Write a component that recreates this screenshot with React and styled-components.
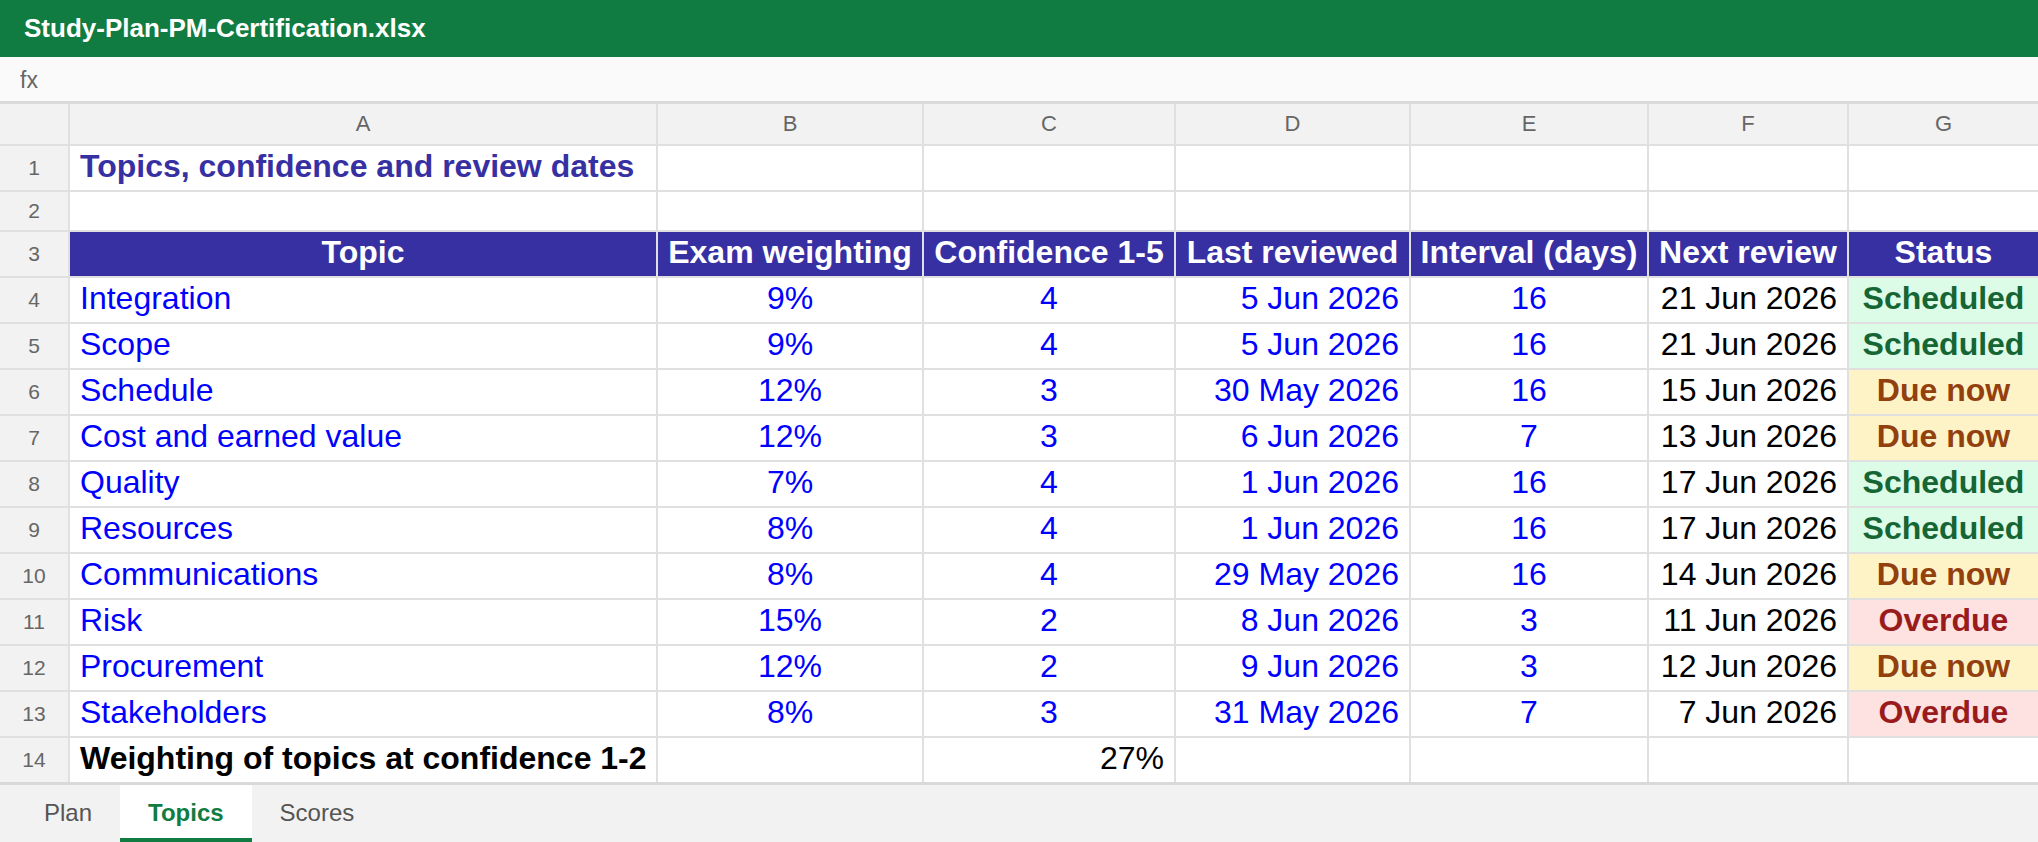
import React from "react";
import styled, { createGlobalStyle } from "styled-components";

const Global = createGlobalStyle`
  html, body { margin: 0; padding: 0; background: #ffffff; overflow: hidden; }
  body { font-family: "Liberation Sans", Arial, sans-serif; }
  * { box-sizing: border-box; }
`;

const Page = styled.div`
  width: 2038px;
  height: 842px;
  display: flex;
  flex-direction: column;
`;

const TitleBar = styled.div`
  height: 57px;
  background: #107c41;
  color: #ffffff;
  font-weight: 700;
  font-size: 26px;
  display: flex;
  align-items: center;
  padding-left: 24px;
`;

const FormulaBar = styled.div`
  height: 47px;
  background: #fafafa;
  border-bottom: 3px solid #dadada;
  display: flex;
  align-items: center;
  padding: 2px 0 0 20px;
  font-size: 23px;
  color: #666666;
`;

const Sheet = styled.div`
  display: grid;
  grid-template-columns: 68px 586px 264px 250px 233px 236px 198px 1fr;
  grid-template-rows: 40px 44px 38px repeat(12, 44px);
  gap: 2px;
  background: #e0e0e0;
`;

const Corner = styled.div`
  background: #f2f2f2;
`;

const ColHead = styled.div`
  background: #f2f2f2;
  color: #666666;
  font-size: 22px;
  display: flex;
  align-items: center;
  justify-content: center;
`;

const RowNum = styled.div`
  background: #f2f2f2;
  color: #666666;
  font-size: 21px;
  display: flex;
  align-items: center;
  justify-content: center;
`;

const justify = { left: "flex-start", center: "center", right: "flex-end" };

const Cell = styled.div`
  background: ${(p) => p.$bg || "#ffffff"};
  color: ${(p) => p.$color || "#000000"};
  font-size: 32px;
  font-weight: ${(p) => (p.$bold ? 700 : 400)};
  display: flex;
  align-items: center;
  justify-content: ${(p) => justify[p.$align || "left"]};
  padding: 0 10px 3px;
  white-space: nowrap;
  overflow: hidden;
`;

const TabBar = styled.div`
  flex: 1;
  background: #f2f2f2;
  border-top: 3px solid #d9d9d9;
  display: flex;
  padding-left: 16px;
`;

const Tab = styled.div`
  padding: 2px 28px 0;
  display: flex;
  align-items: center;
  font-size: 24px;
  font-weight: ${(p) => (p.$active ? 700 : 400)};
  color: ${(p) => (p.$active ? "#107c41" : "#555555")};
  background: ${(p) => (p.$active ? "#ffffff" : "transparent")};
  border-bottom: 4px solid ${(p) => (p.$active ? "#107c41" : "transparent")};
`;

const BLUE = "#0000ff";
const INDIGO = "#3730a3";

const STATUS = {
  Scheduled: { bg: "#dcfce7", color: "#166534" },
  "Due now": { bg: "#fef3c7", color: "#92400e" },
  Overdue: { bg: "#fee2e2", color: "#991b1b" },
};

const topics = [
  ["Integration", "9%", "4", "5 Jun 2026", "16", "21 Jun 2026", "Scheduled"],
  ["Scope", "9%", "4", "5 Jun 2026", "16", "21 Jun 2026", "Scheduled"],
  ["Schedule", "12%", "3", "30 May 2026", "16", "15 Jun 2026", "Due now"],
  ["Cost and earned value", "12%", "3", "6 Jun 2026", "7", "13 Jun 2026", "Due now"],
  ["Quality", "7%", "4", "1 Jun 2026", "16", "17 Jun 2026", "Scheduled"],
  ["Resources", "8%", "4", "1 Jun 2026", "16", "17 Jun 2026", "Scheduled"],
  ["Communications", "8%", "4", "29 May 2026", "16", "14 Jun 2026", "Due now"],
  ["Risk", "15%", "2", "8 Jun 2026", "3", "11 Jun 2026", "Overdue"],
  ["Procurement", "12%", "2", "9 Jun 2026", "3", "12 Jun 2026", "Due now"],
  ["Stakeholders", "8%", "3", "31 May 2026", "7", "7 Jun 2026", "Overdue"],
];

const headers = ["Topic", "Exam weighting", "Confidence 1-5", "Last reviewed", "Interval (days)", "Next review", "Status"];
const letters = ["A", "B", "C", "D", "E", "F", "G"];
const dataAlign = ["left", "center", "center", "right", "center", "right", "center"];

function Empty({ n }) {
  return Array.from({ length: n }, (_, i) => <Cell key={i} />);
}

export default function App() {
  return (
    <Page>
      <Global />
      <TitleBar>Study-Plan-PM-Certification.xlsx</TitleBar>
      <FormulaBar>fx</FormulaBar>
      <Sheet>
        <Corner />
        {letters.map((l) => (
          <ColHead key={l}>{l}</ColHead>
        ))}

        <RowNum>1</RowNum>
        <Cell $bold $color={INDIGO}>Topics, confidence and review dates</Cell>
        <Empty n={6} />

        <RowNum>2</RowNum>
        <Empty n={7} />

        <RowNum>3</RowNum>
        {headers.map((h) => (
          <Cell key={h} $bold $align="center" $bg={INDIGO} $color="#ffffff">
            {h}
          </Cell>
        ))}

        {topics.map((row, r) => (
          <React.Fragment key={row[0]}>
            <RowNum>{r + 4}</RowNum>
            {row.map((v, c) => {
              if (c === 6) {
                const s = STATUS[v];
                return (
                  <Cell key={c} $bold $align="center" $bg={s.bg} $color={s.color}>
                    {v}
                  </Cell>
                );
              }
              return (
                <Cell key={c} $align={dataAlign[c]} $color={c === 5 ? "#000000" : BLUE}>
                  {v}
                </Cell>
              );
            })}
          </React.Fragment>
        ))}

        <RowNum>14</RowNum>
        <Cell $bold>Weighting of topics at confidence 1-2</Cell>
        <Cell />
        <Cell $align="right">27%</Cell>
        <Empty n={4} />
      </Sheet>
      <TabBar>
        <Tab>Plan</Tab>
        <Tab $active>Topics</Tab>
        <Tab>Scores</Tab>
      </TabBar>
    </Page>
  );
}
